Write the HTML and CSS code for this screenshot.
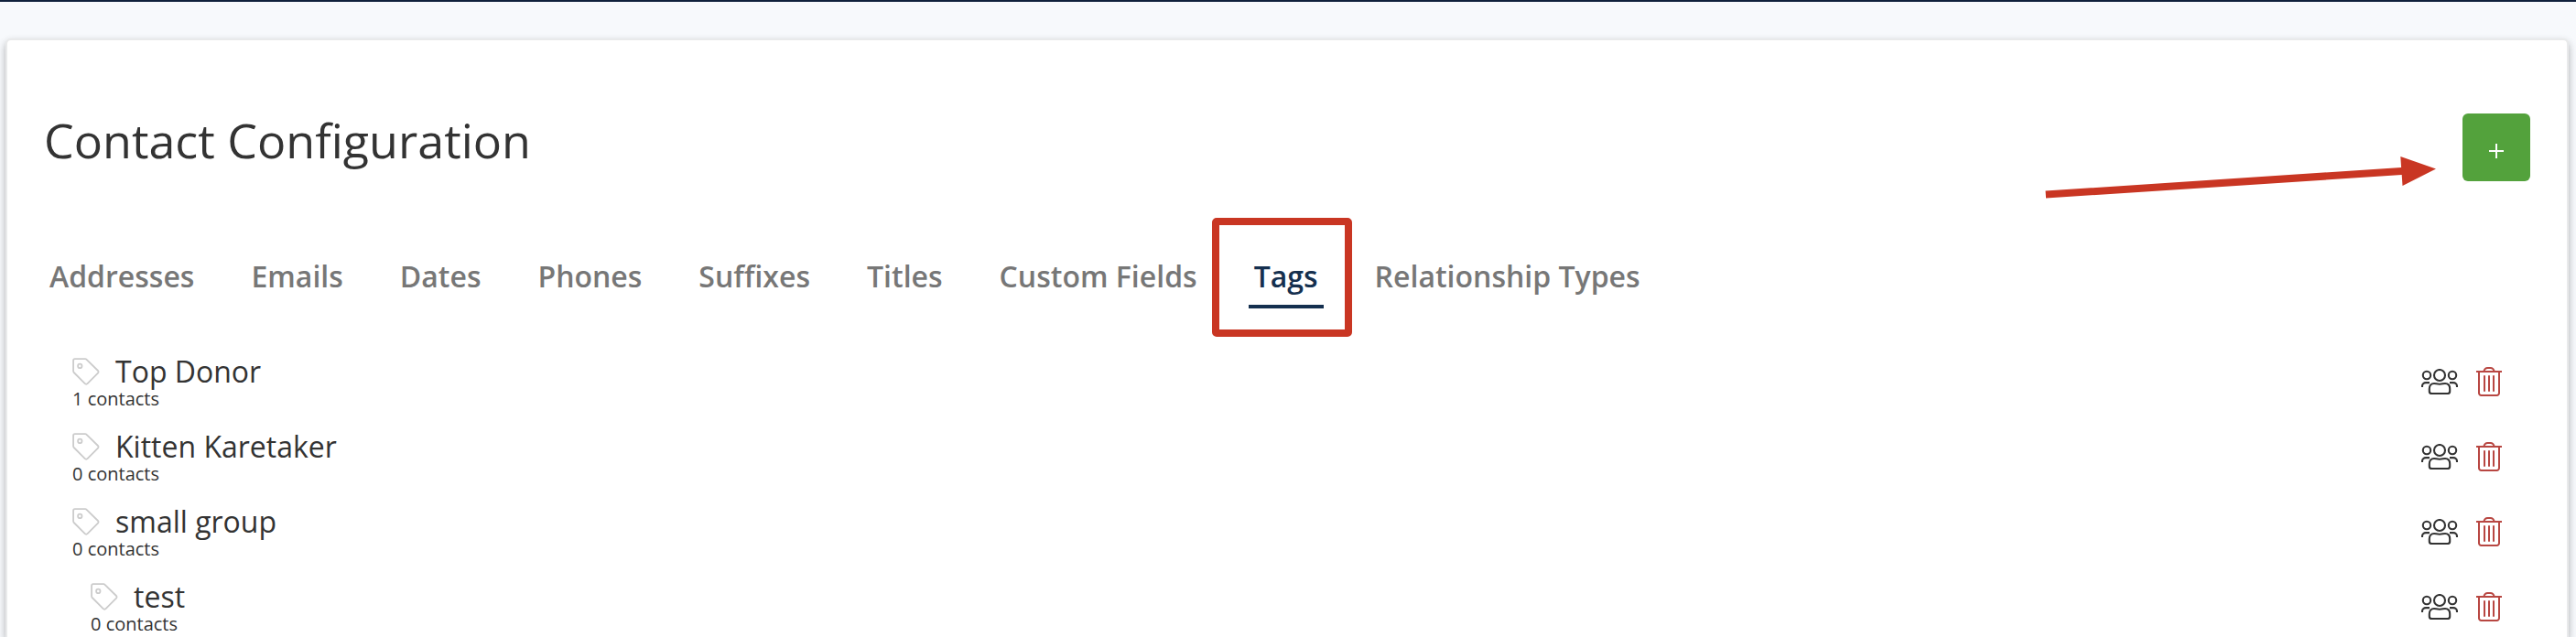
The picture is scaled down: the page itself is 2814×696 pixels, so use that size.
FILE: index.html
```
<!DOCTYPE html>
<html lang="en">
<head>
<meta charset="utf-8">
<title>Contact Configuration</title>
<link rel="stylesheet" href="styles.css">
</head>
<body>
<svg class="sprite" aria-hidden="true">
  <symbol id="tag" viewBox="0 0 30 30">
    <path d="M2.800 1.200H14.200a2 2 0 0 1 1.400.600L28 14a1.900 1.900 0 0 1 0 2.700L16.500 28.200a1.900 1.900 0 0 1-2.700 0L1.700 16a2 2 0 0 1-.600-1.400V3a1.800 1.800 0 0 1 1.700-1.800Z"/>
    <circle cx="8.300" cy="8.900" r="2.200"/>
  </symbol>
  <symbol id="people" viewBox="0 0 40 28">
    <circle cx="20" cy="7" r="6"/>
    <circle cx="6" cy="7" r="4.200"/>
    <circle cx="34" cy="7" r="4.200"/>
    <path d="M14 16c2 0 3 .8 6 .8s4-.8 6-.8c3.400 0 5.200 2.500 5.200 5.800v2.700c0 1.500-1 2.500-2.500 2.500H11.300c-1.500 0-2.500-1-2.500-2.500v-2.700C8.800 18.500 10.600 16 14 16Z"/>
    <path d="M1 20v-1c0-2.200 1.700-3.900 4-3.900h4M39 20v-1c0-2.200-1.700-3.900-4-3.900h-4"/>
  </symbol>
  <symbol id="trash" viewBox="0 0 28 32">
    <path d="M0 5h28M3 5v23.500A2.500 2.500 0 0 0 5.500 31h17a2.500 2.500 0 0 0 2.500-2.500V5M8.300 5c.5-2.300 1.800-4 4.200-4h3c2.400 0 3.700 1.700 4.200 4M9 9.200v17.600M14 9.200v17.600M19 9.200v17.600"/>
  </symbol>
</svg>
<div class="topbar"></div>
<main class="page">
  <section class="card">
    <header class="head">
      <h1 class="title">Contact Configuration</h1>
      <button class="add" aria-label="Add tag"><svg class="plus" viewBox="0 0 16 16"><path d="M8 0v16M0 8h16"/></svg></button>
    </header>
    <nav class="tabs">
      <a class="tab">Addresses</a>
      <a class="tab">Emails</a>
      <a class="tab">Dates</a>
      <a class="tab">Phones</a>
      <a class="tab">Suffixes</a>
      <a class="tab">Titles</a>
      <a class="tab">Custom Fields</a>
      <a class="tab active">Tags<span class="highlight"></span></a>
      <a class="tab">Relationship Types</a>
    </nav>
    <ul class="list">
      <li class="row">
        <div><div class="name"><svg class="tag"><use href="#tag"/></svg>Top Donor</div><div class="count">1 contacts</div></div>
        <div class="actions"><svg class="people"><use href="#people"/></svg><svg class="trash"><use href="#trash"/></svg></div>
      </li>
      <li class="row">
        <div><div class="name"><svg class="tag"><use href="#tag"/></svg>Kitten Karetaker</div><div class="count">0 contacts</div></div>
        <div class="actions"><svg class="people"><use href="#people"/></svg><svg class="trash"><use href="#trash"/></svg></div>
      </li>
      <li class="row">
        <div><div class="name"><svg class="tag"><use href="#tag"/></svg>small group</div><div class="count">0 contacts</div></div>
        <div class="actions"><svg class="people"><use href="#people"/></svg><svg class="trash"><use href="#trash"/></svg></div>
      </li>
      <li class="row child">
        <div><div class="name"><svg class="tag"><use href="#tag"/></svg>test</div><div class="count">0 contacts</div></div>
        <div class="actions"><svg class="people"><use href="#people"/></svg><svg class="trash"><use href="#trash"/></svg></div>
      </li>
    </ul>
  </section>
</main>
<svg class="arrow" viewBox="0 0 430 40"><path d="M4.500 38.600 393.100 13 392.300 1 431 14.500 394.500 33 393.700 21 5 46.600Z"/></svg>
</body>
</html>
```
FILE: styles.css
```
* { box-sizing: border-box; }
html, body { height: 100%; }
body {
  display: flex;
  flex-direction: column;
  margin: 0;
  overflow: hidden;
  background: #f7f9fc;
  color: #333;
  font-family: "Open Sans", sans-serif;
}
.sprite { position: absolute; width: 0; height: 0; }
.topbar { height: 2px; background: #10203c; }
.page { display: flex; flex: 1; min-height: 0; padding: 40px 8px 0 6px; }
.card {
  flex: 1;
  padding: 80px 40px 0;
  border: 2px solid #e9eaeb;
  border-bottom: 0;
  border-radius: 6px 6px 0 0;
  background: #fff;
  box-shadow: 0 4px 8px rgba(0, 0, 0, .3);
}
.head { display: flex; justify-content: space-between; align-items: flex-start; height: 74px; }
.title { margin: 0; font-size: 52px; line-height: 58px; font-weight: 400; }
.add {
  display: flex;
  align-items: center;
  justify-content: center;
  width: 74px;
  height: 74px;
  padding: 8px 0 0;
  border: 0;
  border-radius: 6px;
  background: #53a23c;
}
.plus { width: 16px; height: 16px; fill: none; stroke: #fff; stroke-width: 2; }
.tabs { display: flex; gap: 50px; margin-top: 82px; }
.tab {
  position: relative;
  padding: 0 6px 9px;
  border-bottom: 4px solid transparent;
  color: #777;
  font-size: 32px;
  font-weight: 600;
  line-height: 44px;
  white-space: nowrap;
}
.tab.active { color: #15304f; border-color: #15304f; }
.highlight {
  position: absolute;
  left: -40px;
  top: -42px;
  width: 153px;
  height: 130px;
  border: 8px solid #c93623;
  border-radius: 5px;
}
.list { display: flex; flex-direction: column; gap: 23px; margin: 49.5px 0 0; padding: 0 31px; list-style: none; }
.row { display: flex; justify-content: space-between; align-items: center; height: 59px; }
.child { padding-left: 20px; }
.name { display: flex; align-items: center; gap: 17px; font-size: 32px; line-height: 38px; }
.count { margin-top: 1px; font-size: 20px; line-height: 20px; }
.tag { width: 30px; height: 30px; fill: none; stroke: #ccc; stroke-width: 1.8; }
.actions { display: flex; align-items: center; gap: 20px; padding-top: 2px; }
.people { width: 40px; height: 28px; fill: none; stroke: #333; stroke-width: 2.1; }
.trash { width: 28px; height: 32px; fill: none; stroke: #b84742; stroke-width: 2; }
.arrow { position: absolute; left: 2230px; top: 170px; width: 430px; height: 40px; overflow: visible; fill: #c93623; }
```
